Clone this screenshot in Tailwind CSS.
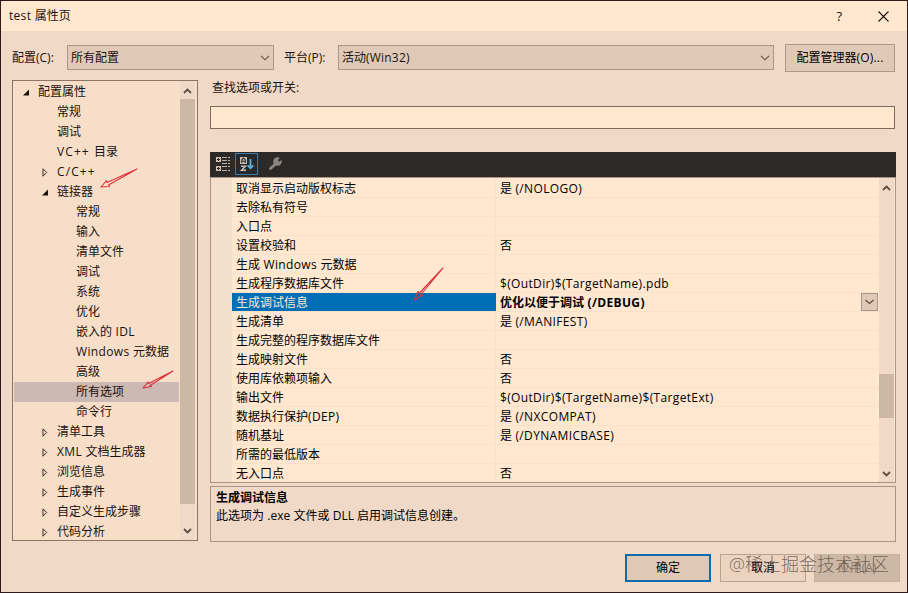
<!DOCTYPE html>
<html lang="zh-CN">
<head>
    <title>test 属性页</title>
    <meta charset="utf-8">
    <meta name="viewport" content="width=device-width, initial-scale=1">
    <script src="https://cdn.jsdelivr.net/npm/@tailwindcss/browser@4"></script>
</head>
<body class="h-[593px] w-[908px] overflow-hidden">
    <div class="relative flex h-[593px] w-[908px] flex-col overflow-hidden border border-[#2e1a18] bg-[#f0d9c6] font-['Open_Sans','Noto_Sans_CJK_SC',sans-serif] text-[12px] leading-5 text-[#1c120c]">

        <!-- Title bar -->
        <div class="flex h-[30px] shrink-0 items-center bg-[#ffe7d0] pl-2 pr-[18px]">
            <span class="flex-1"><span class="tracking-[0.3px]">test </span>属性页</span>
            <span class="mr-[36px] text-[13px]">?</span>
            <svg class="h-[11px] w-[11px]" viewBox="0 0 11 11" fill="none" stroke="#1c120c" stroke-width="1.1"><path d="M.5 .5l10 10M10.500 .5l-10 10"/></svg>
        </div>

        <!-- Configuration row -->
        <div class="flex h-[49px] shrink-0 items-center pl-[11px] pt-[4px]">
            <span class="w-[55px]">配置(C):</span>
            <div class="flex h-[25px] w-[207px] items-center justify-between border border-[#ac9886] bg-[#e0cab7] pl-[3px] pr-[3px]">
                <span>所有配置</span>
                <svg class="h-[6px] w-[10px]" viewBox="0 0 10 6" fill="none" stroke="#5f4e42" stroke-width="1.1"><path d="M1 .8l4 4 4-4"/></svg>
            </div>
            <span class="ml-[10px] w-[54px]">平台(P):</span>
            <div class="flex h-[25px] w-[436px] items-center justify-between border border-[#ac9886] bg-[#e0cab7] pl-[3px] pr-[3px]">
                <span>活动<span class="tracking-[0.2px]">(Win32)</span></span>
                <svg class="h-[6px] w-[10px]" viewBox="0 0 10 6" fill="none" stroke="#5f4e42" stroke-width="1.1"><path d="M1 .8l4 4 4-4"/></svg>
            </div>
            <button class="ml-[11px] h-[28px] w-[110px] border border-[#ac9886] bg-[#e0cab7] text-center text-black">配置管理器<span class="tracking-[0.2px]">(O)...</span></button>
        </div>

        <div class="flex h-[463px] shrink-0 pl-[11px]">
            <!-- Category tree -->
            <div class="flex h-[461px] w-[186px] border border-[#8c7565] bg-[#f6dec9]">
                <div id="tree" class="w-[167px] overflow-hidden pl-px pr-px pt-px"></div>
                <div class="flex w-[15px] flex-col items-center justify-between bg-[#f0d9c6]">
                    <svg class="mt-[7px] h-[6px] w-[9px] shrink-0" viewBox="0 0 9 6" fill="none" stroke="#5f4e42" stroke-width="1.8"><path d="M1 5l3.500-3.500L8 5"/></svg>
                    <div class="mb-auto mt-[5px] h-[405px] w-[15px] bg-[#cdb8a6]"></div>
                    <svg class="mb-[6px] h-[6px] w-[9px] shrink-0" viewBox="0 0 9 6" fill="none" stroke="#5f4e42" stroke-width="1.8"><path d="M1 1l3.500 3.500L8 1"/></svg>
                </div>
            </div>

            <div class="ml-3 flex w-[686px] flex-col">
                <div class="-mt-[2px] h-[28px] pl-[2px]">查找选项或开关:</div>
                <div class="h-[23px] w-[685px] border border-[#806a5a] bg-[#ffe7d0]"></div>

                <!-- Toolbar -->
                <div class="mt-[23px] flex h-[25px] shrink-0 items-center bg-[#2d2926] pb-px pl-[5px]">
                    <svg class="h-4 w-4" viewBox="0 0 16 16">
                        <path fill="#d0c0b0" d="M1 1h5v5H1zM1 10h5v5H1z"/>
                        <path stroke="#2d2926" d="M2 3.500h3M3.500 2v3M2 12.500h3M3.500 11v3"/>
                        <path stroke="#c0b2a6" d="M7 1.500h5M7 4.500h5M7 7.500h5M7 10.500h5M7 14.500h5M13 1.500h2M13 4.500h2M13 7.500h2M13 10.500h2M13 14.500h2"/>
                    </svg>
                    <div class="ml-1 flex h-[22px] w-[23px] items-center justify-center border border-[#3e79a5] bg-[#25282c]">
                        <svg class="h-4 w-4" viewBox="0 0 16 16" fill="none">
                            <path fill="#c9bbae" d="M1 1h7v7H1z"/>
                            <path stroke="#25282c" stroke-width="1.1" d="M2.700 7V4L4.500 2l1.800 2v3M2.700 5.300h3.600"/>
                            <path stroke="#c9bbae" stroke-width="1.500" d="M2 10.200h4.500L2.500 14.300H7"/>
                            <path stroke="#5eb0d2" stroke-width="1.800" d="M11.500 3v9M8.700 9.300l2.800 3 2.800-3"/>
                        </svg>
                    </div>
                    <svg class="ml-[10px] h-4 w-4" viewBox="0 0 16 16">
                        <path stroke="#8d8580" stroke-width="3" stroke-linecap="round" d="M2.500 12.500L8 7.500"/>
                        <circle cx="9.500" cy="5.500" r="4.300" fill="#8d8580"/>
                        <path fill="#2d2926" d="M9.800 4l2.700-2.700 1.700 1.700-2.700 2.700z"/>
                    </svg>
                </div>

                <!-- Property grid -->
                <div class="flex h-[306px] shrink-0 border border-[#ac9484] bg-[#ffe7d0]">
                    <div class="w-[21px] shrink-0 bg-[#f4dfcd]"></div>
                    <div id="grid" class="flex-1 overflow-hidden pt-px"></div>
                    <div class="mr-px flex w-[15px] shrink-0 flex-col items-center bg-[#f0d9c6]">
                        <svg class="mt-[7px] h-[6px] w-[9px] shrink-0" viewBox="0 0 9 6" fill="none" stroke="#5f4e42" stroke-width="1.8"><path d="M1 5l3.500-3.500L8 5"/></svg>
                        <div class="mt-[183px] h-[44px] w-[15px] shrink-0 bg-[#cdb8a6]"></div>
                        <svg class="mb-[5px] mt-auto h-[6px] w-[9px] shrink-0" viewBox="0 0 9 6" fill="none" stroke="#5f4e42" stroke-width="1.8"><path d="M1 1l3.500 3.500L8 1"/></svg>
                    </div>
                </div>

                <!-- Description -->
                <div class="mt-[3px] h-[56px] shrink-0 border border-[#ac9484] px-[5px] pt-px text-black">
                    <div class="h-[18px] font-bold">生成调试信息</div>
                    <div>此选项为 <span class="tracking-[0.1px]">.exe</span> 文件或 DLL 启用调试信息创建。</div>
                </div>
            </div>
        </div>

        <!-- Dialog buttons -->
        <div class="mt-[11px] flex h-[28px] shrink-0 justify-end pr-[7px] text-black">
            <button class="w-[86px] border-2 border-[#0d6dab] bg-[#e0cab7]">确定</button>
            <button class="ml-[9px] w-[86px] border border-[#b8a391] bg-[#ebd3c0]">取消</button>
            <button class="ml-2 w-[86px] border border-[#c7b2a0] bg-[#cdb8a6] text-[#8a7768]">应用(A)</button>
        </div>

        <!-- Watermark -->
        <div class="absolute left-[728px] top-[549px] whitespace-nowrap text-[18px] font-light leading-7 text-[#5c4c42]/80">@稀土掘金技术社区</div>

        <!-- Red pointers -->
        <svg class="absolute left-0 top-0 h-[591px] w-[906px]" viewBox="1 1 906 591" fill="none" stroke="#d9323c" stroke-width="1.1" stroke-linejoin="round">
            <path d="M137 169L107 182.500 106.500 180.500 101 187 109.500 186.500 108.500 185z"/>
            <path d="M173 371L148.500 383.500 148 382 143 388 151.500 386.500 150 385.500z"/>
            <path d="M443 268L419 293.500 418 291.500 414.500 300 422.500 295 420.500 295z"/>
        </svg>
    </div>

    <script>
        // level, arrow state (open / closed / none), label
        const tree = [
            [0, 'open', '配置属性'],
            [1, '', '常规'],
            [1, '', '调试'],
            [1, '', 'VC++ 目录'],
            [1, 'closed', 'C/C++'],
            [1, 'open', '链接器'],
            [2, '', '常规'],
            [2, '', '输入'],
            [2, '', '清单文件'],
            [2, '', '调试'],
            [2, '', '系统'],
            [2, '', '优化'],
            [2, '', '嵌入的 IDL'],
            [2, '', 'Windows 元数据'],
            [2, '', '高级'],
            [2, '', '所有选项'],
            [2, '', '命令行'],
            [1, 'closed', '清单工具'],
            [1, 'closed', 'XML 文档生成器'],
            [1, 'closed', '浏览信息'],
            [1, 'closed', '生成事件'],
            [1, 'closed', '自定义生成步骤'],
            [1, 'closed', '代码分析'],
        ];
        const arrows = {
            open: '<svg class="h-[9px] w-[8px]" viewBox="0 0 8 9"><path fill="#1c120c" d="M7 1.500v6H1z"/></svg>',
            closed: '<svg class="h-[9px] w-[8px]" viewBox="0 0 8 9"><path fill="none" stroke="#3c2e26" d="M2 .8v7.400L5.700 4.500z"/></svg>',
            '': '',
        };
        const indents = ['pl-2', 'pl-[27px]', 'pl-[46px]'];

        // Latin runs are set slightly wider than the Chinese text around them
        function latin(text) {
            return text.replace(/[\x20-\x7e]+/g, run =>
                `<span class="${run.includes('++') ? 'tracking-[1.1px]' : 'tracking-[0.35px]'}">${run}</span>`);
        }

        document.getElementById('tree').innerHTML = tree.map(([level, state, label]) => `
            <div class="flex h-5 items-center whitespace-nowrap ${indents[level]} ${label === '所有选项' ? 'bg-[#cdb9b3]' : ''}">
                <span class="flex w-4 shrink-0">${arrows[state]}</span>
                <span>${latin(label)}</span>
            </div>`).join('');

        const props = [
            ['取消显示启动版权标志', '是 (/NOLOGO)'],
            ['去除私有符号', ''],
            ['入口点', ''],
            ['设置校验和', '否'],
            ['生成 Windows 元数据', ''],
            ['生成程序数据库文件', '$(OutDir)$(TargetName).pdb'],
            ['生成调试信息', '优化以便于调试 (/DEBUG)'],
            ['生成清单', '是 (/MANIFEST)'],
            ['生成完整的程序数据库文件', ''],
            ['生成映射文件', '否'],
            ['使用库依赖项输入', '否'],
            ['输出文件', '$(OutDir)$(TargetName)$(TargetExt)'],
            ['数据执行保护(DEP)', '是 (/NXCOMPAT)'],
            ['随机基址', '是 (/DYNAMICBASE)'],
            ['所需的最低版本', ''],
            ['无入口点', '否'],
        ];
        document.getElementById('grid').innerHTML = props.map(([name, value], i) => {
            const active = i === 6;
            return `
            <div class="flex h-[19px] items-stretch whitespace-nowrap border-b border-[#f8e0ca] leading-[19px] text-black">
                <div class="w-[264px] shrink-0 border-r pl-[4px] ${active ? 'border-[#006eb5] bg-[#006eb5] text-[#ffe7d0]' : 'border-[#f8e0ca]'}">${latin(name)}</div>
                <div class="flex-1 pl-[4px] ${active ? 'font-bold' : ''}">${latin(value)}</div>
                ${active ? '<div class="mr-px flex h-[18px] w-[17px] items-center justify-center border border-[#ac9484] bg-[#e0cab7]"><svg class="h-[6px] w-[9px]" viewBox="0 0 9 6" fill="none" stroke="#5f4e42" stroke-width="1.3"><path d="M.5 1l4 3.500 4-3.500"/></svg></div>' : ''}
            </div>`;
        }).join('');
    </script>
</body>
</html>
